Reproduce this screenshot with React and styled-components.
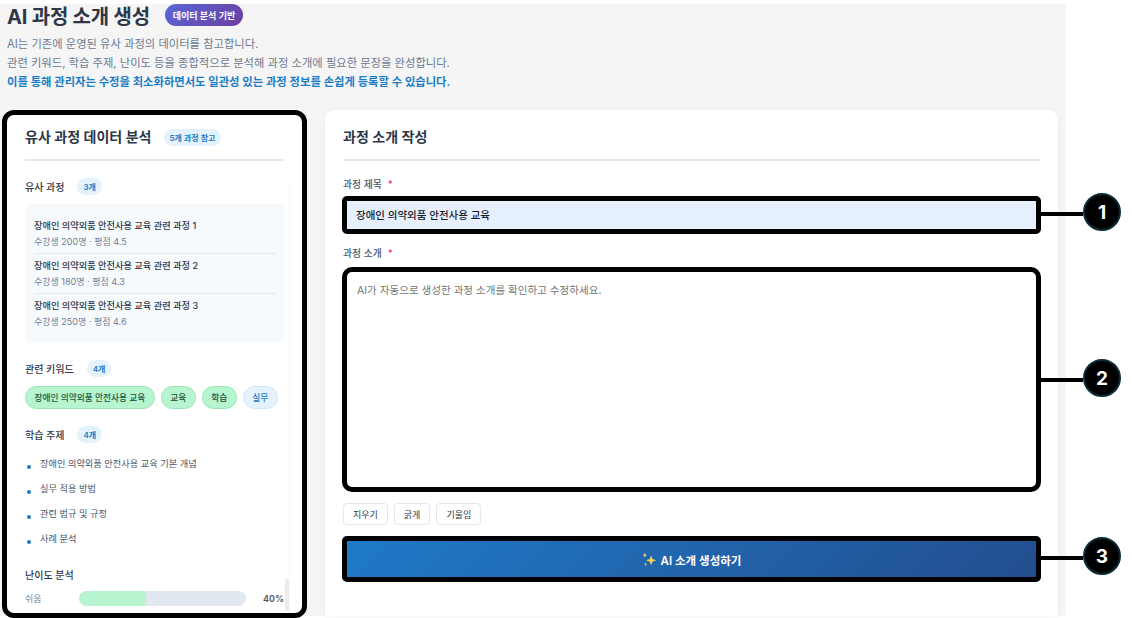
import React from "react";
import styled, { createGlobalStyle } from "styled-components";

const similarCourses = [
  { title: "장애인 의약외품 안전사용 교육 관련 과정 1", meta: "수강생 200명 · 평점 4.5" },
  { title: "장애인 의약외품 안전사용 교육 관련 과정 2", meta: "수강생 180명 · 평점 4.3" },
  { title: "장애인 의약외품 안전사용 교육 관련 과정 3", meta: "수강생 250명 · 평점 4.6" },
];

const keywords = [
  { label: "장애인 의약외품 안전사용 교육", tone: "green" },
  { label: "교육", tone: "green" },
  { label: "학습", tone: "green" },
  { label: "실무", tone: "blue" },
];

const topics = ["장애인 의약외품 안전사용 교육 기본 개념", "실무 적용 방법", "관련 법규 및 규정", "사례 분석"];

function Sparkles() {
  return (
    <svg width="15" height="15" viewBox="0 0 14 14" aria-hidden="true">
      <path d="M8.5 3 L9.7 6.6 L13.2 7.8 L9.7 9 L8.5 12.6 L7.3 9 L3.8 7.8 L7.3 6.6 Z" fill="#fcd34d" />
      <path d="M2.6 0.6 L3.2 2.4 L4.6 3 L3.2 3.6 L2.6 5.4 L2 3.6 L0.8 3 L2 2.4 Z" fill="#fde68a" />
      <path d="M3.4 9.6 L3.9 11 L5 11.5 L3.9 12 L3.4 13.4 L2.9 12 L1.8 11.5 L2.9 11 Z" fill="#fbbf24" />
    </svg>
  );
}

export default function App() {
  return (
    <>
      <GlobalStyle />
      <Screen>
        <Header>
          <TitleRow>
            <Title>AI 과정 소개 생성</Title>
            <TitleBadge>데이터 분석 기반</TitleBadge>
          </TitleRow>
          <Desc>AI는 기존에 운영된 유사 과정의 데이터를 참고합니다.</Desc>
          <Desc>관련 키워드, 학습 주제, 난이도 등을 종합적으로 분석해 과정 소개에 필요한 문장을 완성합니다.</Desc>
          <Desc $strong>이를 통해 관리자는 수정을 최소화하면서도 일관성 있는 과정 정보를 손쉽게 등록할 수 있습니다.</Desc>
        </Header>

        <Columns>
          <AnalysisCard>
            <CardHead>
              <CardTitle>유사 과정 데이터 분석</CardTitle>
              <CountPill>5개 과정 참고</CountPill>
            </CardHead>
            <ScrollArea>
              <Section>
                <SectionHead>
                  <SectionTitle>유사 과정</SectionTitle>
                  <CountPill>3개</CountPill>
                </SectionHead>
                <CourseBox>
                  {similarCourses.map((course) => (
                    <CourseItem key={course.title}>
                      <CourseTitle>{course.title}</CourseTitle>
                      <CourseMeta>{course.meta}</CourseMeta>
                    </CourseItem>
                  ))}
                </CourseBox>
              </Section>

              <Section>
                <SectionHead>
                  <SectionTitle>관련 키워드</SectionTitle>
                  <CountPill>4개</CountPill>
                </SectionHead>
                <ChipRow>
                  {keywords.map((keyword) => (
                    <Chip key={keyword.label} $tone={keyword.tone}>
                      {keyword.label}
                    </Chip>
                  ))}
                </ChipRow>
              </Section>

              <Section>
                <SectionHead>
                  <SectionTitle>학습 주제</SectionTitle>
                  <CountPill>4개</CountPill>
                </SectionHead>
                <TopicList>
                  {topics.map((topic) => (
                    <TopicItem key={topic}>{topic}</TopicItem>
                  ))}
                </TopicList>
              </Section>

              <Section>
                <DifficultyTitle>난이도 분석</DifficultyTitle>
                <BarRow>
                  <BarLabel>쉬움</BarLabel>
                  <BarTrack>
                    <BarFill style={{ width: "40%" }} />
                  </BarTrack>
                  <BarValue>40%</BarValue>
                </BarRow>
              </Section>
              <ScrollThumb />
            </ScrollArea>
          </AnalysisCard>

          <FormCard>
            <CardHead>
              <CardTitle>과정 소개 작성</CardTitle>
            </CardHead>
            <FieldLabel>
              과정 제목<Required>*</Required>
            </FieldLabel>
            <Marked>
              <TitleInput readOnly value="장애인 의약외품 안전사용 교육" />
              <Callout $top={-3}>
                <CalloutLine />
                <CalloutDot>1</CalloutDot>
              </Callout>
            </Marked>
            <FieldLabel $gap>
              과정 소개<Required>*</Required>
            </FieldLabel>
            <Marked>
              <IntroArea readOnly placeholder="AI가 자동으로 생성한 과정 소개를 확인하고 수정하세요." />
              <Callout $top={92}>
                <CalloutLine />
                <CalloutDot>2</CalloutDot>
              </Callout>
            </Marked>
            <ToolRow>
              <ToolButton>지우기</ToolButton>
              <ToolButton>굵게</ToolButton>
              <ToolButton>기울임</ToolButton>
            </ToolRow>
            <Marked>
              <GenerateButton>
                <Sparkles />
                AI 소개 생성하기
              </GenerateButton>
              <Callout $top={1}>
                <CalloutLine />
                <CalloutDot>3</CalloutDot>
              </Callout>
            </Marked>
          </FormCard>
        </Columns>
      </Screen>
    </>
  );
}

const GlobalStyle = createGlobalStyle`
  html, body {
    margin: 0;
    height: 618px;
    overflow: hidden;
    background: #fff;
  }
  * {
    box-sizing: border-box;
  }
  body, button, input, textarea {
    font-family: Inter, "Noto Sans CJK KR", "Noto Sans", sans-serif;
  }
`;

const Screen = styled.div`
  width: 1066px;
  height: 612px;
  margin-top: 4px;
  background: #f5f5f5;
`;

const Header = styled.header`
  height: 106px;
  padding-left: 7px;
`;

const TitleRow = styled.div`
  display: flex;
  align-items: center;
  gap: 15px;
  height: 22px;
  margin-bottom: 9px;
`;

const Title = styled.h1`
  margin: 0;
  font-size: 20px;
  font-weight: 700;
  letter-spacing: -0.2px;
  color: #2d3748;
`;

const TitleBadge = styled.span`
  display: flex;
  align-items: center;
  justify-content: center;
  width: 78px;
  height: 22px;
  border-radius: 11px;
  background: linear-gradient(135deg, #5a67d8, #6b3fa0);
  color: #fff;
  font-size: 9px;
  font-weight: 600;
`;

const Desc = styled.p`
  margin: 0;
  font-size: 11.3px;
  line-height: 19px;
  color: ${(p) => (p.$strong ? "#1a7cc7" : "#6b7a90")};
  font-weight: ${(p) => (p.$strong ? 600 : 400)};
`;

const Columns = styled.div`
  display: grid;
  grid-template-columns: 305px 733px;
  gap: 18px;
  padding-left: 2px;
`;

const AnalysisCard = styled.section`
  display: flex;
  flex-direction: column;
  height: 508px;
  padding: 13px 18px 0;
  background: #fff;
  border: 5px solid #000;
  border-radius: 12px;
`;

const FormCard = styled.section`
  height: 506px;
  padding: 18px 18px 0;
  background: #fff;
  border-radius: 10px 10px 0 0;
  box-shadow: 0 2px 8px rgba(0, 0, 0, 0.04);
`;

const CardHead = styled.div`
  display: flex;
  align-items: center;
  gap: 12px;
  height: 33px;
  padding-bottom: 13px;
  margin-bottom: 17px;
  border-bottom: 2px solid #e2e8f0;
`;

const CardTitle = styled.h2`
  margin: -2px 0 0;
  font-size: 14px;
  font-weight: 600;
  color: #2d3748;
`;

const CountPill = styled.span`
  padding: 0 6px;
  height: 17px;
  display: flex;
  align-items: center;
  border-radius: 9px;
  background: #e3f2fd;
  color: #1a7cc7;
  font-size: 8px;
  font-weight: 600;
`;

const ScrollArea = styled.div`
  position: relative;
  flex: 1;
  min-height: 0;
  margin: -1px -6px 0 0;
  padding-right: 5px;
  overflow: hidden;
  border-right: 1px solid #fafafa;
`;

const ScrollThumb = styled.div`
  position: absolute;
  right: 0;
  bottom: 2px;
  width: 4px;
  height: 32px;
  background: #ececec;
`;

const Section = styled.div`
  margin-bottom: 16px;
`;

const SectionHead = styled.div`
  display: flex;
  align-items: center;
  gap: 13px;
  height: 18px;
  padding-top: 1px;
  margin-bottom: 9px;
`;

const SectionTitle = styled.h3`
  margin: 0;
  font-size: 10px;
  font-weight: 500;
  color: #2d3748;
`;

const CourseBox = styled.div`
  padding: 10px 8px 9px 9px;
  background: #f7fafc;
  border-radius: 6px;
`;

const CourseItem = styled.div`
  height: 40px;
  padding-top: 4px;
  border-bottom: 1px solid #e2e8f0;

  &:last-child {
    border-bottom: 0;
  }
`;

const CourseTitle = styled.div`
  font-size: 9.2px;
  line-height: 16px;
  font-weight: 500;
  color: #2d3748;
`;

const CourseMeta = styled.div`
  font-size: 9px;
  line-height: 15px;
  color: #718096;
`;

const ChipRow = styled.div`
  display: flex;
  gap: 6px;
`;

const Chip = styled.span`
  display: flex;
  align-items: center;
  height: 23px;
  padding: 0 8.5px;
  border-radius: 12px;
  font-size: 8.7px;
  font-weight: 500;
  white-space: nowrap;
  background: ${(p) => (p.$tone === "blue" ? "#e3f2fd" : "#b7f5d0")};
  border: 1px solid ${(p) => (p.$tone === "blue" ? "#cfe6fa" : "#9ae6b4")};
  color: ${(p) => (p.$tone === "blue" ? "#1a7cc7" : "#22543d")};
`;

const TopicList = styled.ul`
  margin: 0 0 -1px;
  padding: 0;
  list-style: none;
`;

const TopicItem = styled.li`
  position: relative;
  height: 25px;
  padding-left: 15px;
  font-size: 9.2px;
  line-height: 23px;
  color: #4a5568;

  &::before {
    content: "";
    position: absolute;
    left: 2px;
    top: 13px;
    width: 4px;
    height: 4px;
    border-radius: 50%;
    background: #1a7cc7;
  }
`;

const DifficultyTitle = styled(SectionTitle)`
  height: 17px;
  line-height: 17px;
  margin-bottom: 7px;
`;

const BarRow = styled.div`
  display: flex;
  align-items: center;
  height: 15px;
`;

const BarLabel = styled.span`
  width: 54px;
  font-size: 9px;
  color: #718096;
`;

const BarTrack = styled.div`
  width: 167px;
  height: 15px;
  border-radius: 8px;
  background: #e2e8f0;
  overflow: hidden;
`;

const BarFill = styled.div`
  height: 100%;
  background: #b7f5d0;
`;

const BarValue = styled.span`
  margin-left: auto;
  font-size: 9px;
  font-weight: 600;
  color: #4a5568;
`;

const FieldLabel = styled.label`
  display: block;
  height: 14px;
  line-height: 14px;
  margin: ${(p) => (p.$gap ? "13px 0 6px" : "0 0 4px")};
  font-size: 9.8px;
  font-weight: 500;
  color: #4a5568;
`;

const Required = styled.span`
  margin-left: 6px;
  color: #e53e3e;
`;

const Marked = styled.div`
  position: relative;
  margin: 0 -1px;
`;

const TitleInput = styled.input`
  display: block;
  width: 100%;
  height: 38px;
  padding: 0 9px 2px;
  border: 5px solid #000;
  border-radius: 5px;
  outline: none;
  background: #e6effc;
  font-size: 10.5px;
  font-weight: 500;
  color: #1a202c;
`;

const IntroArea = styled.textarea`
  display: block;
  width: 100%;
  height: 225px;
  padding: 11px 10px;
  border: 5px solid #000;
  border-radius: 10px;
  outline: none;
  resize: none;
  background: #fff;
  font-size: 10.55px;
  line-height: 15px;

  &::placeholder {
    color: #757575;
    opacity: 1;
  }
`;

const ToolRow = styled.div`
  display: flex;
  gap: 6px;
  margin: 11px 0;
`;

const ToolButton = styled.button`
  height: 22px;
  padding: 0 9px;
  background: #fff;
  border: 1px solid #e2e8f0;
  border-radius: 4px;
  font-size: 9px;
  color: #2d3748;
`;

const GenerateButton = styled.button`
  display: flex;
  align-items: center;
  justify-content: center;
  gap: 4px;
  width: 100%;
  height: 46px;
  padding-top: 2px;
  border: 5px solid #000;
  border-radius: 5px;
  background: linear-gradient(135deg, #1f7ac8, #234e8f);
  color: #fff;
  font-size: 11.5px;
  font-weight: 600;
`;

const Callout = styled.div`
  position: absolute;
  top: ${(p) => p.$top}px;
  left: 100%;
  display: flex;
  align-items: center;
`;

const CalloutLine = styled.span`
  width: 42px;
  height: 4px;
  margin-top: 4px;
  background: #000;
`;

const CalloutDot = styled.span`
  display: flex;
  align-items: center;
  justify-content: center;
  width: 38px;
  height: 38px;
  border: 2px solid #0b2f3a;
  border-radius: 50%;
  background: #000;
  color: #fff;
  font-size: 19px;
  font-weight: 700;
`;
